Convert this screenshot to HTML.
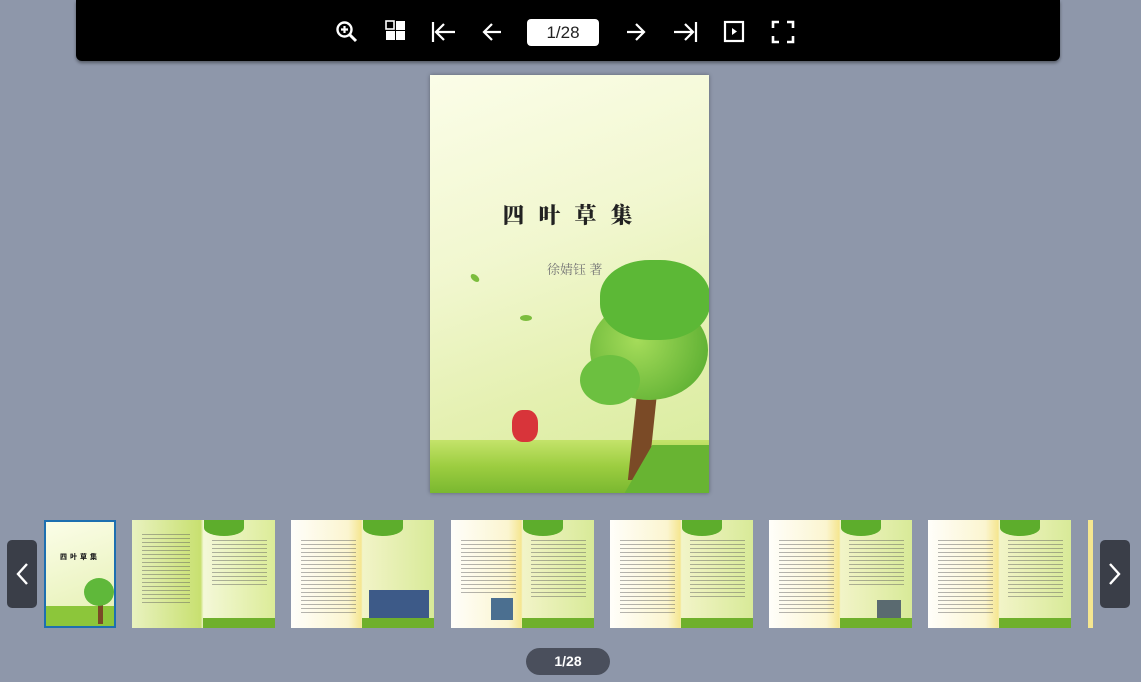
<!DOCTYPE html>
<html><head><meta charset="utf-8"><style>
*{margin:0;padding:0;box-sizing:border-box}
body{width:1141px;height:682px;background:#8e97aa;position:relative;overflow:hidden;font-family:"Liberation Sans","Noto Sans CJK SC",sans-serif}
.bar{position:absolute;left:76px;top:0;width:984px;height:61px;background:#000;border-radius:0 0 6px 6px;box-shadow:0 2px 3px rgba(0,0,0,.4)}
.bar svg{position:absolute;top:20px}
.pg{position:absolute;left:527px;top:19px;width:72px;height:27px;background:#fff;border-radius:4px;text-align:center;line-height:27px;font-size:17px;color:#222}
.cover{position:absolute;left:430px;top:75px;width:279px;height:418px;overflow:hidden;box-shadow:0 0 4px rgba(0,0,0,.35);
background:linear-gradient(160deg,#fbfde8 0%,#f1f7cf 40%,#e4f0b0 70%,#d6eb9a 100%)}
.thumb{position:absolute;top:520px;height:108px;overflow:hidden}
.sp{background:linear-gradient(90deg,#e9f2c0 0%,#c8e070 48%,#f4f8d8 50%,#dcec98 100%)}
.sp2{background:linear-gradient(90deg,#fffefa 0%,#fbf5d0 40%,#f5e690 49%,#f2f4c8 50%,#d8ea98 100%)}
.txt{position:absolute;background:repeating-linear-gradient(180deg,rgba(90,90,90,.45) 0 1px,transparent 1px 4px)}
.leaf{position:absolute;left:72px;top:0;width:40px;height:16px;border-radius:0 0 50% 50%;background:#5dad2c}
.grass{position:absolute;left:71px;right:0;bottom:0;height:10px;background:#6fb02c}
.arr{position:absolute;top:540px;width:30px;height:68px;background:#3a3e48;border-radius:5px}
</style></head><body>
<div class="bar">
<svg style="left:259px" width="24" height="24" viewBox="0 0 24 24"><circle cx="9.5" cy="9.5" r="7" fill="none" stroke="#fff" stroke-width="2.4"/><path d="M14.5 14.5 L21 21" stroke="#fff" stroke-width="3"/><path d="M9.5 6v7M6 9.5h7" stroke="#fff" stroke-width="2.2"/></svg>
<svg style="left:309px" width="22" height="22" viewBox="0 0 22 22"><rect x="1" y="1" width="8" height="8" fill="none" stroke="#fff" stroke-width="1.6"/><rect x="11" y="1" width="9" height="9" fill="#fff"/><rect x="1" y="11" width="9" height="9" fill="#fff"/><rect x="11" y="11" width="9" height="9" fill="#fff"/></svg>
<svg style="left:355px" width="26" height="24" viewBox="0 0 26 24"><path d="M2 2v20M24 12H6M13 4l-8 8 8 8" fill="none" stroke="#fff" stroke-width="2.2"/></svg>
<svg style="left:405px" width="22" height="24" viewBox="0 0 22 24"><path d="M20 12H3M11 4l-8 8 8 8" fill="none" stroke="#fff" stroke-width="2.2"/></svg>
<svg style="left:549px" width="22" height="24" viewBox="0 0 22 24"><path d="M2 12h17M11 4l8 8-8 8" fill="none" stroke="#fff" stroke-width="2.2"/></svg>
<svg style="left:596px" width="26" height="24" viewBox="0 0 26 24"><path d="M24 2v20M2 12h18M13 4l8 8-8 8" fill="none" stroke="#fff" stroke-width="2.2"/></svg>
<svg style="left:647px" width="22" height="24" viewBox="0 0 22 24"><rect x="2" y="2" width="18" height="19" fill="none" stroke="#fff" stroke-width="2.2"/><path d="M9 8l5 3.5L9 15z" fill="#fff"/></svg>
<svg style="left:695px" width="24" height="24" viewBox="0 0 24 24"><path d="M2 8V2h6M16 2h6v6M22 16v6h-6M8 22H2v-6" fill="none" stroke="#fff" stroke-width="2.6"/></svg>
</div>
<div class="pg">1/28</div>

<div class="cover">
<div style="position:absolute;left:0;right:0;top:124px;text-align:center;font-family:'Noto Serif CJK SC',serif;font-weight:900;font-size:22px;letter-spacing:14px;color:#222;padding-left:10px">四叶草集</div>
<div style="position:absolute;left:117px;top:184px;font-family:'Noto Serif CJK SC',serif;font-size:13px;color:#777">徐婧钰 著</div>
<div style="position:absolute;left:0;right:0;top:365px;bottom:0;background:linear-gradient(180deg,#c4e36a,#9ccd40 50%,#7ab830)"></div>
<div style="position:absolute;left:205px;top:270px;width:20px;height:135px;background:#7a4a26;transform:skew(-6deg)"></div>
<div style="position:absolute;left:160px;top:225px;width:118px;height:100px;border-radius:50%;background:radial-gradient(circle at 40% 40%,#a5dc5a,#4ea62a)"></div>
<div style="position:absolute;left:170px;top:185px;width:110px;height:80px;border-radius:45%;background:#5cb836"></div>
<div style="position:absolute;left:150px;top:280px;width:60px;height:50px;border-radius:50%;background:#6cc040"></div>
<div style="position:absolute;left:82px;top:335px;width:26px;height:32px;border-radius:40%;background:#d8343a"></div>
<div style="position:absolute;left:40px;top:200px;width:10px;height:6px;border-radius:50%;background:#7cbd3e;transform:rotate(40deg)"></div>
<div style="position:absolute;left:90px;top:240px;width:12px;height:6px;border-radius:50%;background:#7cbd3e"></div>
<div style="position:absolute;left:205px;top:370px;width:90px;height:60px;background:#68b432;transform:skew(-30deg)"></div>
</div>

<div class="thumb" style="left:44px;width:72px;border:2px solid #1d6fb0;background:linear-gradient(160deg,#fbfde8,#e4f0b0)">
<div style="position:absolute;left:0;right:0;top:30px;text-align:center;font-size:7px;font-weight:900;letter-spacing:3px;color:#222">四叶草集</div>
<div style="position:absolute;left:0;right:0;bottom:0;height:20px;background:#8cc63a"></div>
<div style="position:absolute;left:52px;top:72px;width:5px;height:30px;background:#7a4a26"></div>
<div style="position:absolute;left:38px;top:56px;width:30px;height:28px;border-radius:50%;background:#5fb83a"></div>
</div>
<div class="thumb sp" style="left:132px;width:143px"><div class="leaf"></div><div class="txt" style="left:10px;top:14px;width:48px;height:70px"></div><div class="txt" style="left:80px;top:20px;width:55px;height:45px"></div><div class="grass"></div></div>
<div class="thumb sp2" style="left:291px;width:143px"><div class="leaf"></div><div class="txt" style="left:10px;top:20px;width:55px;height:75px"></div><div style="position:absolute;left:78px;top:70px;width:60px;height:28px;background:#3d5a88"></div><div class="grass"></div></div>
<div class="thumb sp2" style="left:451px;width:143px"><div class="leaf"></div><div class="txt" style="left:10px;top:20px;width:55px;height:55px"></div><div class="txt" style="left:80px;top:20px;width:55px;height:60px"></div><div style="position:absolute;left:40px;top:78px;width:22px;height:22px;background:#4b6f90"></div><div class="grass"></div></div>
<div class="thumb sp2" style="left:610px;width:143px"><div class="leaf"></div><div class="txt" style="left:10px;top:20px;width:55px;height:75px"></div><div class="txt" style="left:80px;top:20px;width:55px;height:60px"></div><div class="grass"></div></div>
<div class="thumb sp2" style="left:769px;width:143px"><div class="leaf"></div><div class="txt" style="left:10px;top:20px;width:55px;height:75px"></div><div class="txt" style="left:80px;top:20px;width:55px;height:45px"></div><div style="position:absolute;left:108px;top:80px;width:24px;height:18px;background:#5a6a70"></div><div class="grass"></div></div>
<div class="thumb sp2" style="left:928px;width:143px"><div class="leaf"></div><div class="txt" style="left:10px;top:20px;width:55px;height:75px"></div><div class="txt" style="left:80px;top:20px;width:55px;height:60px"></div><div class="grass"></div></div>
<div class="thumb" style="left:1088px;width:5px;background:#f5e690"></div>

<div class="arr" style="left:7px"><svg width="30" height="68" viewBox="0 0 30 68"><path d="M20 24L11 34l9 10" fill="none" stroke="#fff" stroke-width="2.4"/></svg></div>
<div class="arr" style="left:1100px"><svg width="30" height="68" viewBox="0 0 30 68"><path d="M10 24l9 10-9 10" fill="none" stroke="#fff" stroke-width="2.4"/></svg></div>
<div style="position:absolute;left:526px;top:648px;width:84px;height:27px;border-radius:14px;background:#4a4f5c;color:#fff;text-align:center;line-height:27px;font-size:14px;font-weight:bold">1/28</div>
</body></html>
